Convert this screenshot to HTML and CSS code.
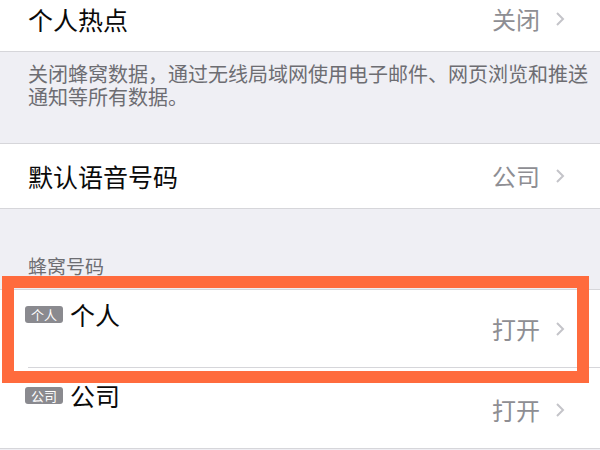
FILE: index.html
```html
<html>
    <head>
        <meta charset="utf-8" />
        <title>蜂窝移动网络</title>
        <link rel="stylesheet" href="styles.css">
    </head>
    <body>
        <div class="group first">
            <div class="row">
                <span class="title">个人热点</span>
                <span class="value">关闭<svg class="chev" viewBox="0 0 10 16"><polyline points="2,2 8,8 2,14"/></svg></span>
            </div>
        </div>
        <div class="footer">关闭蜂窝数据，通过无线局域网使用电子邮件、网页浏览和推送<br>通知等所有数据。</div>
        <div class="group">
            <div class="row">
                <span class="title">默认语音号码</span>
                <span class="value">公司<svg class="chev" viewBox="0 0 10 16"><polyline points="2,2 8,8 2,14"/></svg></span>
            </div>
        </div>
        <div class="header">蜂窝号码</div>
        <div class="group sims">
            <div class="row sim">
                <span class="title"><span class="badge">个人</span>个人</span>
                <span class="value">打开<svg class="chev" viewBox="0 0 10 16"><polyline points="2,2 8,8 2,14"/></svg></span>
            </div>
            <div class="row sim last">
                <span class="title"><span class="badge">公司</span>公司</span>
                <span class="value">打开<svg class="chev" viewBox="0 0 10 16"><polyline points="2,2 8,8 2,14"/></svg></span>
            </div>
            <div class="mark"></div>
        </div>
    </body>
</html>
```

FILE: styles.css
```css
body {
    margin: 0;
    background-color: #efeff4;
    font-family: "Noto Sans CJK SC", "Noto Sans", sans-serif;
    overflow: hidden;
}
.group {
    background-color: #fff;
    border-top: solid 1px #d6d6da;
    border-bottom: solid 1px #d6d6da;
}
.group.first {
    margin-top: -13px;
    border-top: none;
}
.row {
    display: flex;
    align-items: center;
    justify-content: space-between;
    height: 64px;
    padding: 0 35px 0 28px;
}
.title {
    display: flex;
    align-items: center;
    font-size: 25px;
    line-height: 30px;
    color: #0a0a0a;
}
.value {
    display: flex;
    align-items: center;
    font-size: 24px;
    line-height: 30px;
    color: #8e8e93;
}
.chev {
    width: 10px;
    height: 16px;
    margin-left: 15px;
    fill: none;
    stroke: #c4c4c9;
    stroke-width: 2;
}
.footer {
    padding: 12px 0 33px 28px;
    font-family: "Liberation Sans", "Noto Sans CJK SC", sans-serif;
    font-size: 20px;
    line-height: 23px;
    color: #6d6d72;
    white-space: nowrap;
}
.header {
    padding: 46px 28px 12px 28px;
    font-size: 19px;
    line-height: 22px;
    color: #6d6d72;
}
.sims {
    position: relative;
}
.sim {
    position: relative;
    align-items: flex-start;
    box-sizing: border-box;
    height: 78px;
    padding-top: 9px;
}
.sim .value {
    margin-top: 15px;
}
.sim.last {
    height: 80px;
    padding-top: 12px;
}
.sim:not(.last)::after {
    content: "";
    position: absolute;
    left: 28px;
    right: 0;
    bottom: 0;
    border-bottom: solid 1px #d6d6da;
}
.badge {
    display: inline-block;
    background-color: #8a8a8f;
    color: #fff;
    font-size: 13px;
    line-height: 17px;
    padding: 0 6px;
    border-radius: 3px;
    margin-left: -3px;
    margin-right: 7px;
}
.mark {
    position: absolute;
    left: 2px;
    top: -14px;
    width: 563px;
    height: 83px;
    border: solid 12px #ff6b3d;
}
```
